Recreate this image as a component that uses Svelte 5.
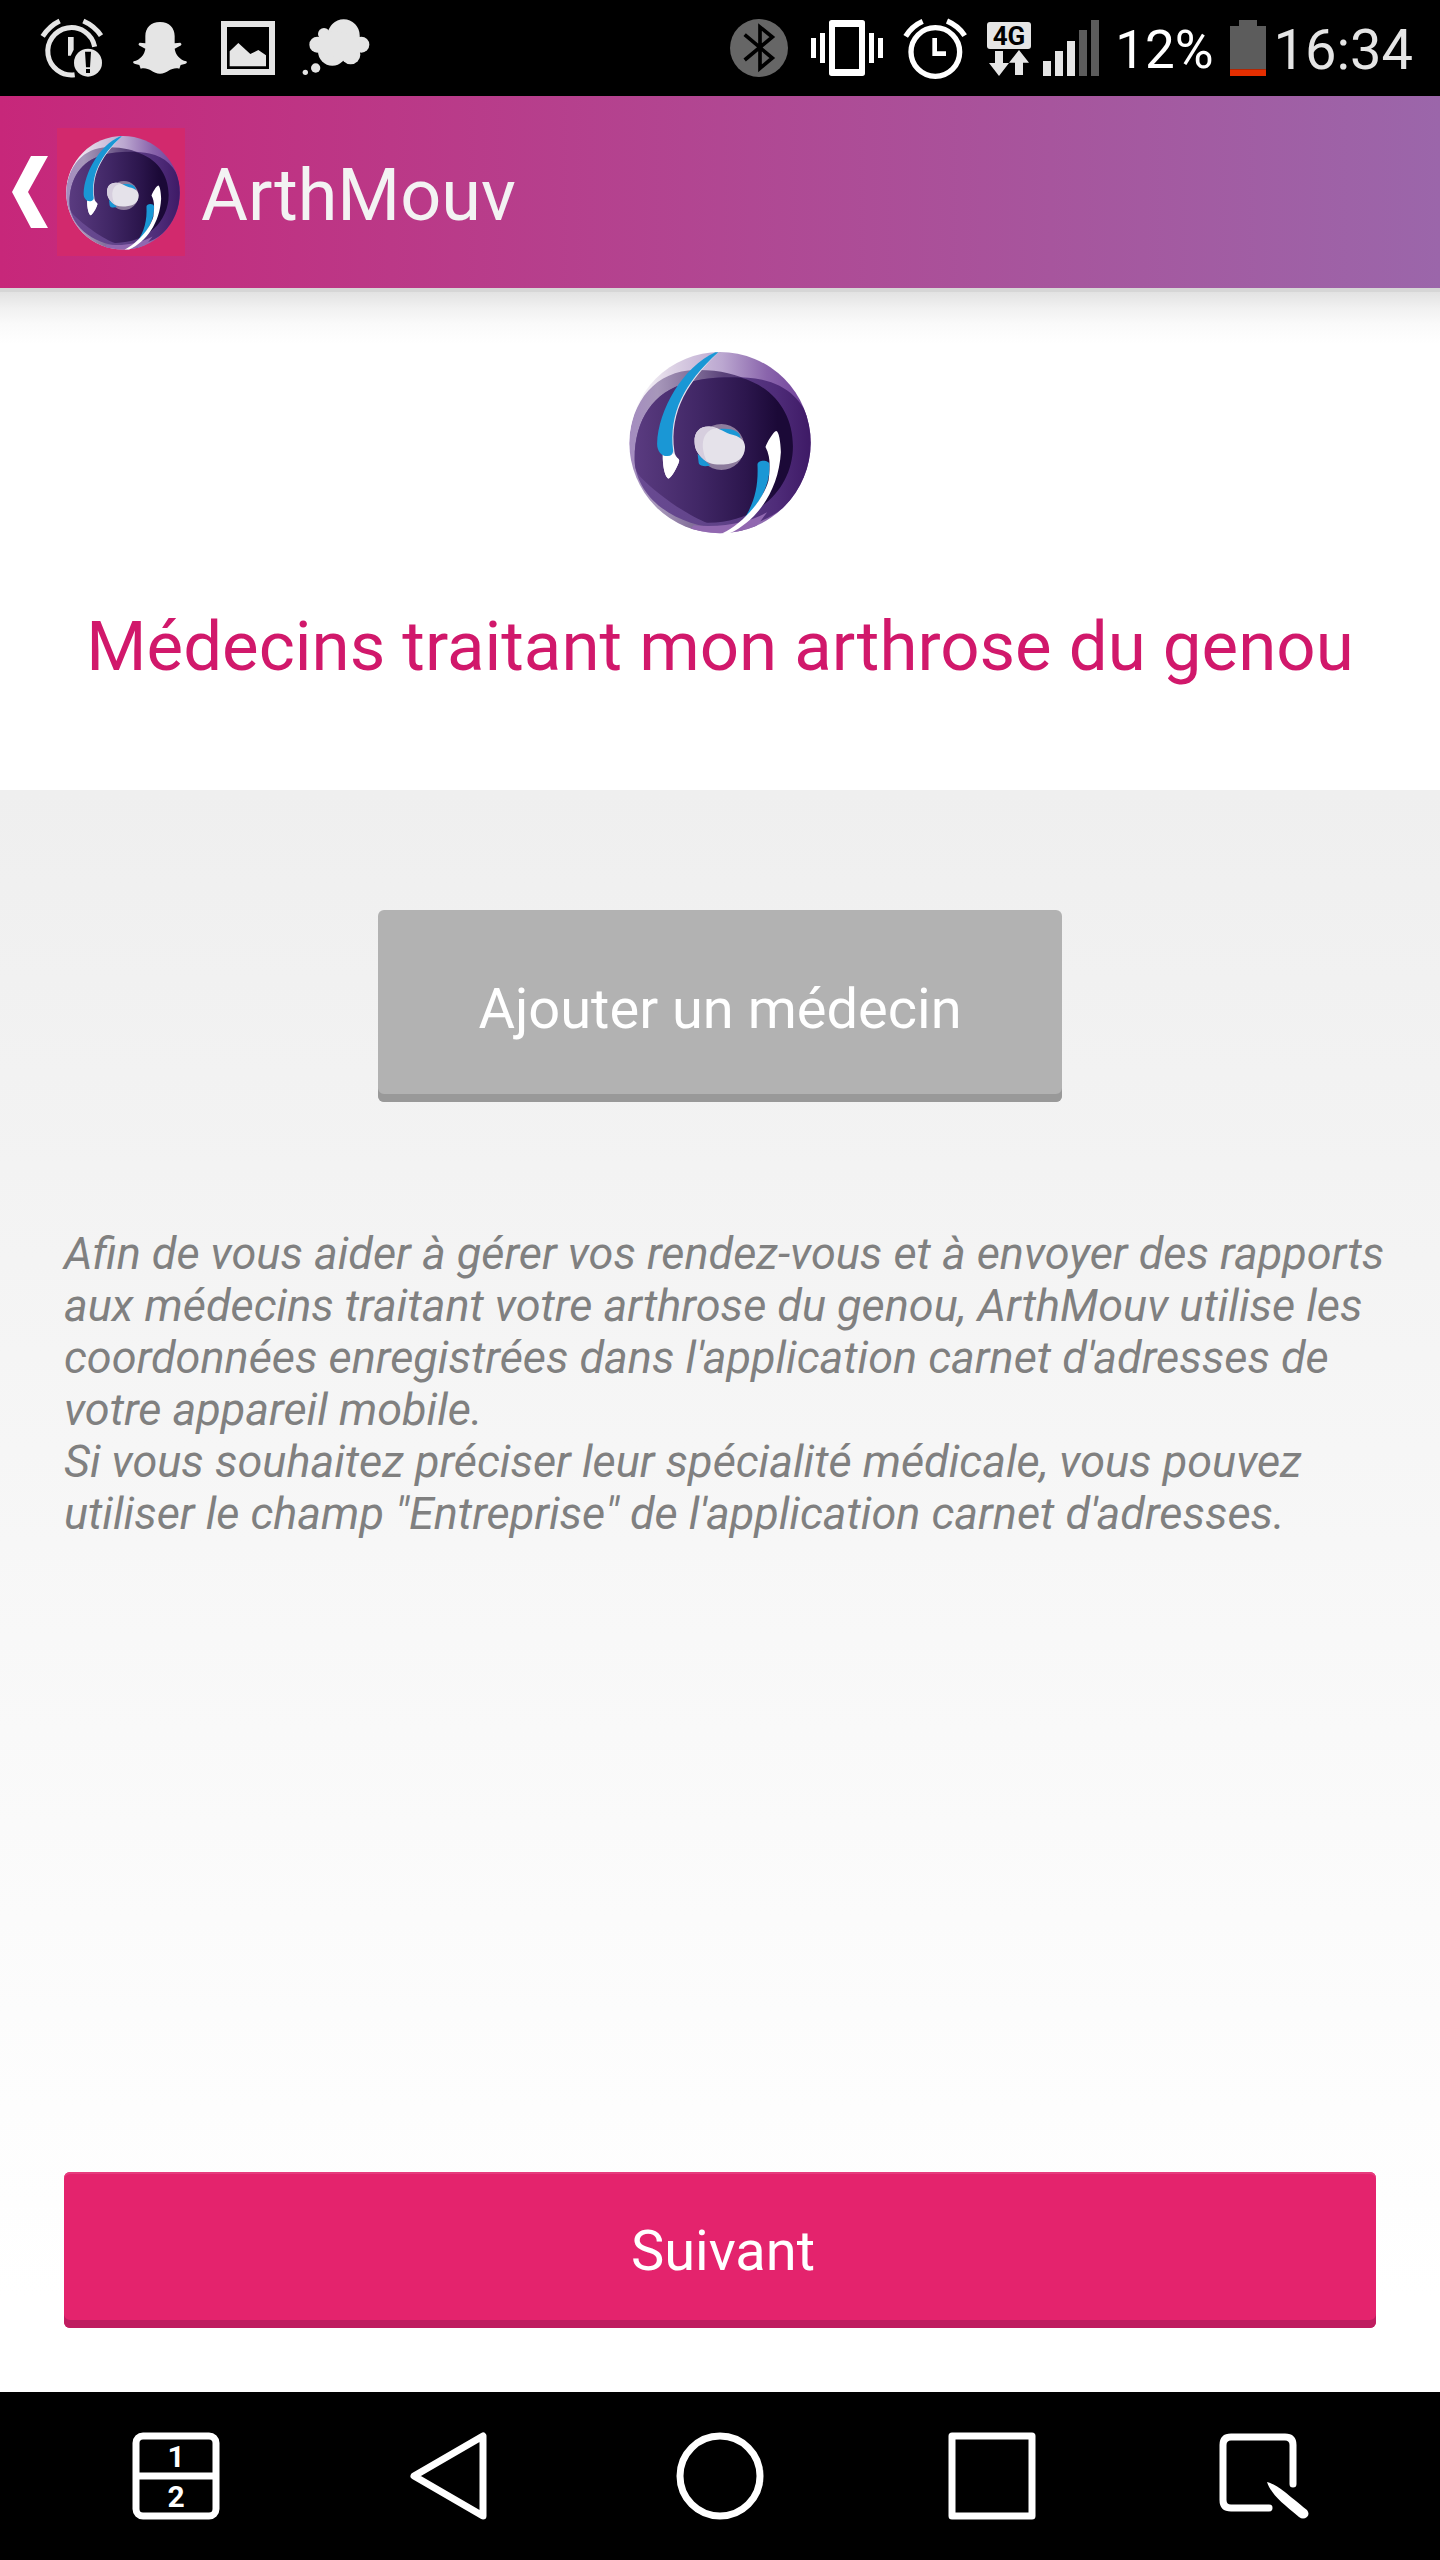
<script>
  const title = 'ArthMouv';
</script>

{#snippet logo(id)}
  <svg class="emblem" viewBox="87 66 544 544" aria-hidden="true">
    <defs>
      <linearGradient id="{id}-back" gradientUnits="userSpaceOnUse" x1="100" y1="0" x2="631" y2="0">
        <stop offset="0" stop-color="#fdfcfd" />
        <stop offset="0.2" stop-color="#dfd5e6" />
        <stop offset="0.5" stop-color="#bba7d0" />
        <stop offset="0.75" stop-color="#8a65ac" />
        <stop offset="1" stop-color="#6c3b97" />
      </linearGradient>
      <linearGradient id="{id}-mid" gradientUnits="userSpaceOnUse" x1="87" y1="0" x2="560" y2="0">
        <stop offset="0" stop-color="#a48cc0" />
        <stop offset="0.18" stop-color="#a797ba" />
        <stop offset="0.4" stop-color="#83709a" />
        <stop offset="0.6" stop-color="#594179" />
        <stop offset="1" stop-color="#4a2775" />
      </linearGradient>
      <linearGradient id="{id}-lobe" gradientUnits="userSpaceOnUse" x1="100" y1="0" x2="631" y2="0">
        <stop offset="0" stop-color="#6a4b93" />
        <stop offset="0.5" stop-color="#5f4288" />
        <stop offset="0.8" stop-color="#4f2c79" />
        <stop offset="1" stop-color="#3e1a66" />
      </linearGradient>
      <linearGradient id="{id}-core" gradientUnits="userSpaceOnUse" x1="105" y1="0" x2="578" y2="0">
        <stop offset="0" stop-color="#5a3b80" />
        <stop offset="0.4" stop-color="#412766" />
        <stop offset="0.7" stop-color="#2c164d" />
        <stop offset="0.9" stop-color="#1b0937" />
        <stop offset="1" stop-color="#1b0937" />
      </linearGradient>
      <clipPath id="{id}-clip"><circle cx="359" cy="337" r="271" /></clipPath>
    </defs>
    <g clip-path="url(#{id}-clip)">
      <rect x="87" y="66" width="544" height="544" fill="url(#{id}-back)" />
      <path d="M87 340C92 210 170 122 285 120C350 118 410 132 455 156L560 300L430 600H230C130 560 87 450 87 340Z" fill="url(#{id}-mid)" />
      <path d="M104 390C102 270 160 185 260 158C330 139 420 135 485 149C560 166 612 212 631 290V400C590 540 480 590 370 592C240 592 110 510 104 390Z" fill="url(#{id}-lobe)" />
      <path d="M104 390C102 270 160 185 260 158C310 144 355 140 420 142C520 170 577 250 577 348C577 475 470 578 320 576C270 560 170 490 122 440C108 425 104 410 104 390Z" fill="url(#{id}-core)" />
      <path d="M280 584C380 594 460 568 500 545L450 610H260Z" fill="#9168b0" />
    </g>
    <path d="M354 67C270 150 205 240 223 365C226 383 238 384 237 392C232 410 215 440 206 444C196 444 187 410 188 372L200 260C225 180 285 95 345 67Z" fill="#e8e3ee" />
    <path d="M188 370H222C228 384 238 384 237 392C232 410 215 440 206 444C196 444 187 410 188 370Z" fill="#fff" />
    <path d="M354 67C250 160 206 250 219 362C218 372 212 378 200 377C184 377 171 362 171 340C174 240 248 110 345 67Z" fill="#1a97d5" />
    <path d="M471 403C471 387 506 387 507 402C510 460 480 520 425 574C462 520 474 470 471 403Z" fill="#1a97d5" />
    <path d="M527 302C519 303 498 338 495 350C512 380 508 420 504 450C488 510 425 580 366 608H388C470 570 535 480 541 365C540 335 535 302 527 302Z" fill="#fff" />
    <circle cx="363" cy="350" r="69" fill="#8d7c9d" />
    <path d="M355 297C385 292 420 300 420 322L380 320Z M292 370L330 405C310 410 295 406 295 395Z" fill="#1a97d5" />
    <path d="M283 335C281 305 300 287 328 289C350 290 368 304 388 311C420 318 433 330 434 350C433 385 410 400 370 402C340 404 320 398 305 381C290 368 283 355 283 335Z" fill="#e5e2ea" />
    <path d="M283 335C281 305 300 287 328 289L349 294C310 298 295 340 320 394C295 380 284 355 283 335Z" fill="#d6cede" />
  </svg>
{/snippet}

<div class="screen">
  <div class="status">
    <div class="group">
      <svg class="cell" viewBox="108 0 216 288" aria-label="Alarme manquée">
        <g fill="none" stroke="#e5e5e5" stroke-width="15">
          <path d="M128 109Q148 78 179 63M250 63Q284 78 303 107" />
          <path d="M284 140A71 71 0 1 0 224 224" />
        </g>
        <path d="M204 111H221V149L212 167H204Z" fill="#e5e5e5" />
        <circle cx="264" cy="188" r="42" fill="#e5e5e5" />
        <path d="M255 155H273L270 202H258ZM258 207H270V219H258Z" fill="#000" />
      </svg>
      <svg class="cell" viewBox="372 0 216 288" aria-label="Snapchat">
        <path d="M480 66C508 66 524 84 524 108V130L541 128Q549 134 538 139L524 146C526 163 540 180 559 184Q564 189 554 192L542 195L538 206C524 203 516 207 508 211C498 218 490 221 480 221C470 221 462 218 452 211C444 207 436 203 422 206L418 195L406 192Q396 189 401 184C420 180 434 163 436 146L422 139Q411 134 419 128L436 130V108C436 84 452 66 480 66Z" fill="#e5e5e5" />
      </svg>
      <svg class="cell" viewBox="636 0 216 288" aria-label="Image">
        <rect x="672" y="72" width="144" height="144" fill="none" stroke="#e5e5e5" stroke-width="18" />
        <path d="M689 154L715 129L751 162L775 150L798 166V199H689Z" fill="#e5e5e5" />
      </svg>
      <svg class="cell" viewBox="900 0 216 288" aria-label="Message">
        <g fill="#e5e5e5">
          <circle cx="1031" cy="106" r="48" />
          <circle cx="972" cy="102" r="18" />
          <circle cx="952" cy="134" r="24" />
          <circle cx="997" cy="154" r="43" />
          <circle cx="1052" cy="164" r="29" />
          <circle cx="1084" cy="134" r="24" />
          <path d="M960 110L1000 90L1080 110L1078 168L1028 182L960 150Z" />
          <circle cx="947" cy="204" r="14" />
          <circle cx="916" cy="217" r="8" />
        </g>
      </svg>
    </div>

    <div class="group">
      <svg class="cell" viewBox="69 0 216 288" aria-label="Bluetooth">
        <circle cx="177" cy="144" r="87" fill="#666" />
        <path d="M134 104L217 174L180 205V81L217 111L134 180" fill="none" stroke="#000" stroke-width="11" />
      </svg>
      <svg class="cell" viewBox="333 0 216 288" aria-label="Vibreur">
        <path fill-rule="evenodd" d="M395 60H487Q495 60 495 68V220Q495 228 487 228H395Q387 228 387 220V68Q387 60 395 60ZM405 81V207H477V81Z" fill="#fff" />
        <path d="M333 114H348V174H333ZM360 99H375V189H360ZM507 99H522V189H507ZM534 114H549V174H534Z" fill="#fff" />
      </svg>
      <svg class="cell" viewBox="597 0 216 288" aria-label="Alarme">
        <g fill="none" stroke="#fff" stroke-width="16">
          <circle cx="706" cy="156" r="73" />
          <path d="M617 109Q636 78 668 64M741 63Q776 78 794 107" />
          <path d="M704 114V161H738" stroke-width="14" />
        </g>
      </svg>
      <svg class="network" viewBox="861 0 336 288" aria-label="Réseau 4G">
        <rect x="861" y="66" width="132" height="81" rx="9" fill="#e5e5e5" />
        <text x="927" y="135" class="g4" text-anchor="middle">4G</text>
        <path d="M885 153H909V189H927L897 228L867 189H885ZM957 150L987 188H969V225H945V188H927Z" fill="#e5e5e5" />
        <path d="M1029 183H1053V228H1029ZM1065 153H1089V228H1065ZM1101 123H1125V228H1101Z" fill="#e5e5e5" />
        <path d="M1137 90H1161V228H1137ZM1173 60H1197V228H1173Z" fill="#5c5c5c" />
      </svg>
      <span class="percent">12%</span>
      <div class="power">
        <svg class="battery" viewBox="567 0 108 288" aria-label="Batterie">
          <path d="M567 78H594V60H648V78H675V208H567Z" fill="#5c5c5c" />
          <path d="M567 208H675V228H567Z" fill="#e52e00" />
        </svg>
        <time class="clock">16:34</time>
      </div>
    </div>
  </div>

  <header>
    <button class="back" aria-label="Retour">
      <svg class="chevron" viewBox="0 0 40 72" aria-hidden="true">
        <path d="M22 0H39L19 36L39 72H22L3 36Z" fill="#fff" />
      </svg>
      <span class="badge">{@render logo('bar')}</span>
    </button>
    <span class="name">{title}</span>
  </header>

  <section class="intro">
    <div class="brand">{@render logo('hero')}</div>
    <h1>Médecins traitant mon arthrose du genou</h1>
  </section>

  <main>
    <button class="add">Ajouter un médecin</button>
    <p>
      Afin de vous aider à gérer vos rendez-vous et à envoyer des rapports aux médecins traitant votre arthrose du
      genou, ArthMouv utilise les coordonnées enregistrées dans l'application carnet d'adresses de votre appareil
      mobile.<br />
      Si vous souhaitez préciser leur spécialité médicale, vous pouvez utiliser le champ "Entreprise" de l'application
      carnet d'adresses.
    </p>
    <button class="next">Suivant</button>
  </main>

  <nav>
    <button aria-label="Double fenêtre">
      <svg viewBox="0 0 88 88">
        <g fill="none" stroke="#fff" stroke-width="7">
          <rect x="4" y="4" width="80" height="80" rx="7" />
          <path d="M4 44H84" />
        </g>
        <text x="44" y="35" class="digit" text-anchor="middle">1</text>
        <text x="44" y="75" class="digit" text-anchor="middle">2</text>
      </svg>
    </button>
    <button aria-label="Précédent">
      <svg viewBox="0 0 88 88">
        <path d="M79 4V84L10 44Z" fill="none" stroke="#fff" stroke-width="7" stroke-linejoin="round" />
      </svg>
    </button>
    <button aria-label="Accueil">
      <svg viewBox="0 0 88 88"><circle cx="44" cy="44" r="40" fill="none" stroke="#fff" stroke-width="7" /></svg>
    </button>
    <button aria-label="Applications récentes">
      <svg viewBox="0 0 88 88">
        <rect x="4" y="4" width="80" height="80" fill="none" stroke="#fff" stroke-width="7" stroke-linejoin="round" />
      </svg>
    </button>
    <button aria-label="Mémo rapide">
      <svg viewBox="0 0 88 88">
        <path d="M73 52V13Q73 5 65 5H11Q3 5 3 13V68Q3 76 11 76H49" fill="none" stroke="#fff" stroke-width="7" stroke-linecap="round" />
        <path d="M47 50C58 53 66 61 87 78Q90 82 87 85Q83 88 79 85C62 71 51 62 47 50Z" fill="#fff" />
      </svg>
    </button>
  </nav>
</div>

<style>
  :global(body) {
    margin: 0;
  }

  .screen {
    display: flex;
    flex-direction: column;
    min-height: 100vh;
    background: #fff;
    font-family: Roboto, 'Noto Sans', sans-serif;
  }

  svg {
    display: block;
    flex: none;
    overflow: visible;
  }

  button {
    margin: 0;
    padding: 0;
    border: 0;
    background: none;
    color: #fff;
    font: inherit;
    cursor: pointer;
  }

  .status {
    display: flex;
    justify-content: space-between;
    padding: 0 27px 0 36px;
    background: #000;
  }

  .group {
    display: flex;
    align-items: center;
    gap: 16px;
  }

  .cell {
    width: 72px;
    height: 96px;
  }

  .network {
    width: 112px;
    height: 96px;
  }

  .battery {
    width: 36px;
    height: 96px;
  }

  .g4 {
    fill: #000;
    font-size: 78px;
    font-weight: 700;
  }

  .percent {
    padding-top: 4px;
    color: #fff;
    font-size: 53px;
    line-height: 64px;
  }

  .power {
    display: flex;
    align-items: center;
    gap: 8px;
  }

  .clock {
    padding-top: 4px;
    color: #e5e5e5;
    font-size: 56px;
    line-height: 64px;
  }

  header {
    position: relative;
    display: flex;
    align-items: center;
    gap: 16px;
    padding: 32px 9px;
    background: linear-gradient(90deg, #c7277a, #9b66aa);
  }

  header::after {
    content: '';
    position: absolute;
    top: 100%;
    left: 0;
    right: 0;
    height: 56px;
    background: linear-gradient(#d6d6d6 0, #d6d6d6 4px, #e2e2e2 4px, #f1f1f1 20px, #fafafa 36px, #fff);
  }

  .back {
    display: flex;
    align-items: center;
    gap: 8px;
  }

  .chevron {
    width: 40px;
    height: 72px;
  }

  .badge {
    display: grid;
    place-items: center;
    box-sizing: border-box;
    width: 128px;
    height: 128px;
    padding: 2px 0 0 4px;
    background: #d2296d;
  }

  .badge .emblem {
    width: 114px;
    height: 114px;
  }

  .name {
    padding-top: 8px;
    color: #f3f3f3;
    font-size: 72px;
    line-height: 84px;
  }

  .intro {
    display: flex;
    flex-direction: column;
    align-items: center;
    gap: 72px;
    padding: 64px 64px 102px;
  }

  .brand .emblem {
    width: 182px;
    height: 182px;
  }

  h1 {
    margin: 0;
    color: #d1186b;
    font-size: 69px;
    font-weight: 400;
    line-height: 82px;
    text-align: center;
  }

  main {
    display: flex;
    flex: 1;
    flex-direction: column;
    padding: 120px 64px 64px;
    background: linear-gradient(#efefef, #fff 94%);
  }

  .add,
  .next {
    border-radius: 6px;
    font-size: 56px;
    line-height: 64px;
  }

  .add {
    align-self: center;
    padding: 67px 100px 61px;
    background: #b2b2b2;
    box-shadow: inset 0 -8px #999;
  }

  .next {
    margin-top: auto;
    padding: 47px 32px 45px 38px;
    background: #e4236d;
    box-shadow: inset 0 -8px #bf1d60, inset 0 2px #e63c7e;
  }

  p {
    margin: 126px -16px 64px 0;
    color: #808080;
    font-size: 45px;
    font-style: italic;
    line-height: 52px;
  }

  nav {
    display: grid;
    grid-template-columns: repeat(5, 1fr);
    padding: 40px;
    background: #000;
  }

  nav button {
    display: grid;
    place-items: center;
  }

  nav svg {
    width: 88px;
    height: 88px;
  }

  .digit {
    fill: #fff;
    font-size: 30px;
    font-weight: 700;
  }
</style>
